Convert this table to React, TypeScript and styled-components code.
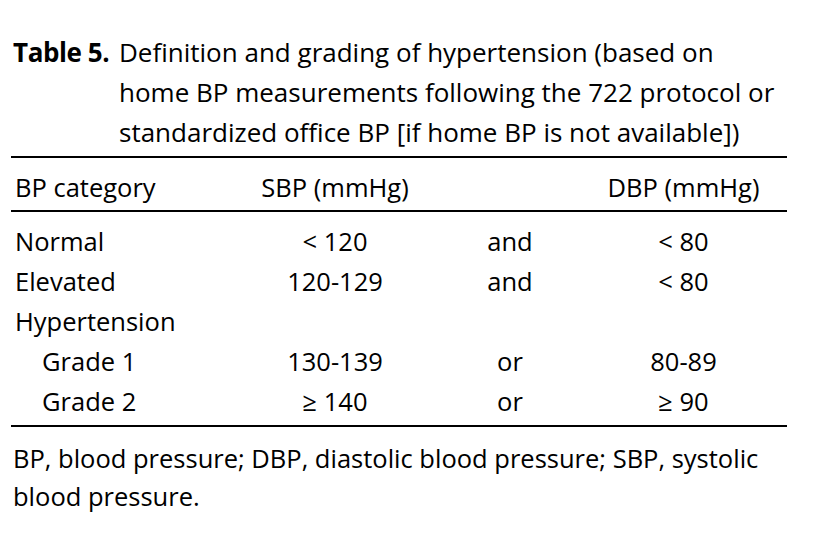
import React from "react";
import styled, { createGlobalStyle } from "styled-components";

const GlobalStyle = createGlobalStyle`
  body {
    margin: 0;
    background: #ffffff;
    font-family: "Open Sans", "Noto Sans", sans-serif;
    color: #000000;
  }
`;

const Page = styled.div`
  width: 818px;
  height: 540px;
  padding: 32px 0 0 11px;
  box-sizing: border-box;
`;

const Caption = styled.div`
  display: flex;
  padding-left: 2px;
  font-size: 26px;
  line-height: 40px;
  white-space: nowrap;
`;

const CaptionLabel = styled.span`
  font-weight: 700;
  width: 106px;
  flex-shrink: 0;
  letter-spacing: -0.4px;
`;

const CaptionText = styled.span`
  display: block;
`;

const Table = styled.div`
  width: 776px;
  margin-top: 4px;
  padding-bottom: 4px;
  border-top: 2px solid #000;
  border-bottom: 2px solid #000;
`;

const Row = styled.div<{ $head?: boolean }>`
  display: grid;
  grid-template-columns: 219px 210px 140px 207px;
  height: 40px;
  align-items: center;
  font-size: 25.5px;
  line-height: 40px;
  ${(p) =>
    p.$head
      ? "border-bottom: 2px solid #000; height: 54px; padding-top: 9px; box-sizing: border-box; align-items: start; margin-bottom: 9px;"
      : ""}
`;

const Cell = styled.div<{ $center?: boolean; $indent?: number }>`
  text-align: ${(p) => (p.$center ? "center" : "left")};
  padding-left: ${(p) => p.$indent ?? 4}px;
  white-space: nowrap;
`;

const Footnote = styled.p`
  margin: 12px 0 0 2px;
  width: 780px;
  font-size: 25.5px;
  line-height: 38px;
`;

type Entry = {
  label: string;
  sbp: string;
  link: string;
  dbp: string;
  sub?: boolean;
};

const rows: Entry[] = [
  { label: "Normal", sbp: "< 120", link: "and", dbp: "< 80" },
  { label: "Elevated", sbp: "120-129", link: "and", dbp: "< 80" },
  { label: "Hypertension", sbp: "", link: "", dbp: "" },
  { label: "Grade 1", sbp: "130-139", link: "or", dbp: "80-89", sub: true },
  { label: "Grade 2", sbp: "≥ 140", link: "or", dbp: "≥ 90", sub: true },
];

export default function App() {
  return (
    <>
      <GlobalStyle />
      <Page>
        <Caption>
          <CaptionLabel>Table 5.</CaptionLabel>
          <CaptionText>
            Definition and grading of hypertension (based on
            <br />
            home BP measurements following the 722 protocol or
            <br />
            standardized office BP [if home BP is not available])
          </CaptionText>
        </Caption>
        <Table>
          <Row $head>
            <Cell>BP category</Cell>
            <Cell $center $indent={0}>SBP (mmHg)</Cell>
            <Cell />
            <Cell $center $indent={0}>DBP (mmHg)</Cell>
          </Row>
          {rows.map((r) => (
            <Row key={r.label}>
              <Cell $indent={r.sub ? 31 : 4}>{r.label}</Cell>
              <Cell $center $indent={0}>{r.sbp}</Cell>
              <Cell $center $indent={0}>{r.link}</Cell>
              <Cell $center $indent={0}>{r.dbp}</Cell>
            </Row>
          ))}
        </Table>
        <Footnote>
          BP, blood pressure; DBP, diastolic blood pressure; SBP, systolic blood
          pressure.
        </Footnote>
      </Page>
    </>
  );
}
